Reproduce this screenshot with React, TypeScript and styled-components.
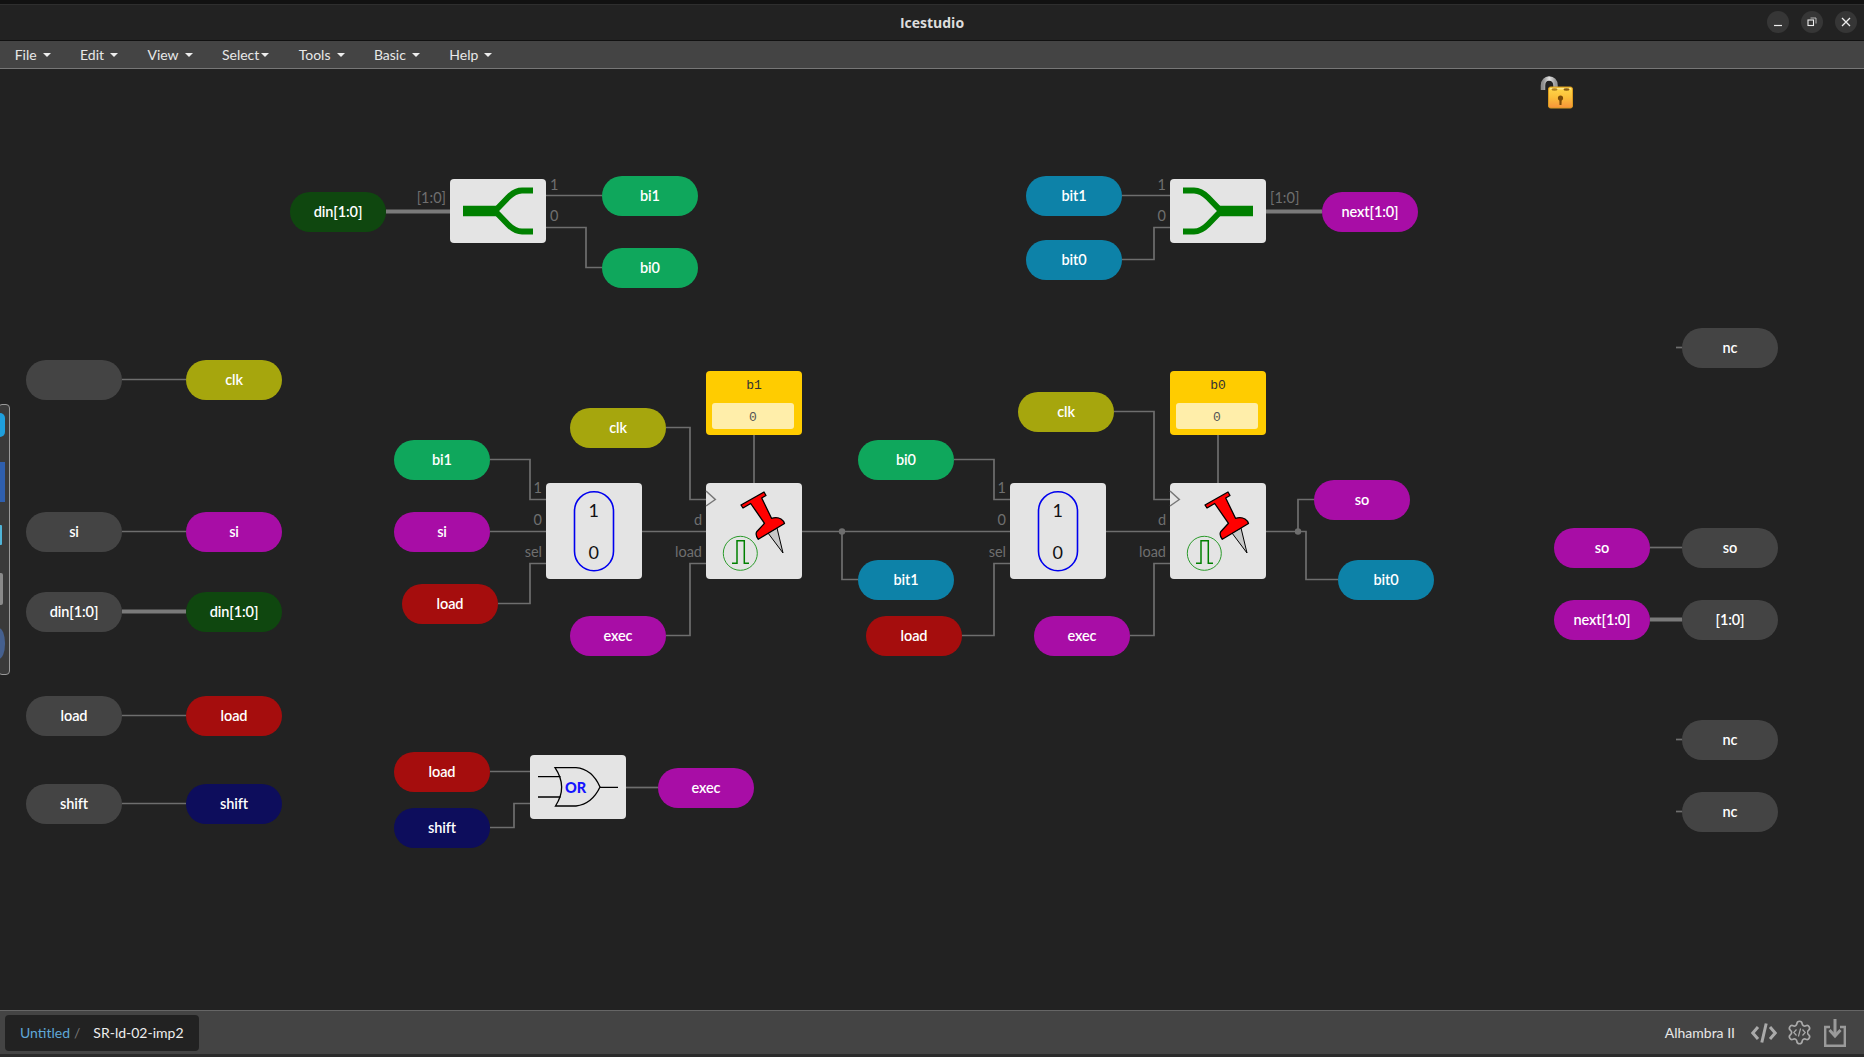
import React from "react";
import styled, { createGlobalStyle } from "styled-components";
import { Settings } from "lucide-react";

const OY = 69;

const Global = createGlobalStyle`
  html, body { margin: 0; padding: 0; background: #222; }
  body { font-family: "Lato", "Liberation Sans", sans-serif; }
`;

const Shell = styled.div`
  width: 1864px; height: 1057px; display: flex; flex-direction: column; overflow: hidden;
  background: #222; color: #fff;
`;
const TopStrip = styled.div`height: 4px; background: #111; border-bottom: 1px solid #2e2e2e; flex: none;`;
const TitleBar = styled.div`
  height: 35px; flex: none; background: #222; border-bottom: 1px solid #111;
  display: flex; align-items: center; justify-content: center; position: relative;
`;
const Title = styled.div`
  font-family: "Open Sans", "Noto Sans", sans-serif; font-weight: 700; font-size: 14px; color: #ddd; margin-top: -1px;
`;
const WinButtons = styled.div`
  position: absolute; right: 7px; top: 6px; display: flex; gap: 12px;
`;
const WinButton = styled.div`
  width: 22px; height: 22px; border-radius: 50%; background: #363636;
  display: flex; align-items: center; justify-content: center;
`;
const MenuBar = styled.div`
  height: 27px; flex: none; background: #444; border-bottom: 1px solid #777;
  display: flex; align-items: center;
`;
const MenuItem = styled.div<{ $gap?: number }>`
  display: flex; align-items: center; gap: ${p => p.$gap ?? 6}px; padding: 0 14.7px;
  font-size: 14px; color: #e8e8e8;
`;
const Caret = styled.span`
  width: 0; height: 0; border-left: 4px solid transparent; border-right: 4px solid transparent;
  border-top: 4.5px solid #eee; margin-top: 1px;
`;
const Canvas = styled.div`flex: 1; position: relative; background: #222; overflow: hidden;`;
const Wires = styled.svg`position: absolute; left: 0; top: 0;`;

const Pill = styled.div<{ $x: number; $y: number; $bg: string }>`
  position: absolute; left: ${p => p.$x}px; top: ${p => p.$y - OY}px;
  width: 96px; height: 40px; box-sizing: border-box; padding-bottom: 2px;
  border-radius: 20px; background: ${p => p.$bg};
  display: flex; align-items: center; justify-content: center;
  color: #fff; font-size: 14.5px; font-weight: 600; letter-spacing: -0.1px;
`;
const Block = styled.div<{ $x: number; $y: number; $h: number }>`
  position: absolute; left: ${p => p.$x}px; top: ${p => p.$y - OY}px;
  width: 96px; height: ${p => p.$h}px; border-radius: 4px; background: #e4e4e4;
`;
const Symbol = styled.svg`display: block; overflow: visible;`;
const PortLabel = styled.div<{ $x: number; $y: number; $right?: boolean }>`
  position: absolute; top: ${p => p.$y - OY - 10}px; line-height: 20px;
  font-size: 14.5px; color: #6f6f6f; white-space: nowrap;
  ${p => (p.$right ? `right: ${1864 - p.$x}px;` : `left: ${p.$x}px;`)}
`;
const Constant = styled.div<{ $x: number; $y: number }>`
  position: absolute; left: ${p => p.$x}px; top: ${p => p.$y - OY}px;
  width: 96px; height: 64px; border-radius: 4px; background: #ffcc00;
  box-sizing: border-box; padding: 6px; display: flex; flex-direction: column; align-items: flex-start;
`;
const ConstName = styled.div`
  font-family: "Liberation Mono", monospace; font-size: 13px; color: #333; line-height: 16px; height: 25px;
  padding-top: 1px; align-self: center;
`;
const ConstField = styled.div`
  width: 82px; height: 26px; box-sizing: border-box; padding-top: 2px; border-radius: 3px; background: #ffeeaa; color: #555;
  font-family: "Liberation Mono", monospace; font-size: 13px;
  display: flex; align-items: center; justify-content: center;
`;
const Palette = styled.div`
  position: absolute; left: -2px; top: ${404 - OY}px; width: 10px; height: 269px;
  background: #3a3a3a; border: 1px solid #999; border-radius: 4px; overflow: hidden;
`;
const PaletteIcon = styled.div<{ $top: number; $w: number; $h: number; $bg: string; $r: string }>`
  position: absolute; left: 0; top: ${p => p.$top - 405}px; width: ${p => p.$w}px; height: ${p => p.$h}px;
  background: ${p => p.$bg}; border-radius: ${p => p.$r};
`;
const LockWrap = styled.div`position: absolute; left: 1540px; top: ${76 - OY}px;`;
const Footer = styled.div`
  height: 43px; flex: none; background: #444; border-top: 1px solid #666; border-bottom: 3px solid #2a2a2a;
  display: flex; align-items: center; justify-content: space-between; padding: 0 18px 0 5px;
`;
const Crumbs = styled.div`
  height: 36px; width: 194px; box-sizing: border-box; background: #222; border-radius: 4px;
  display: flex; align-items: center; padding-left: 15px; font-size: 14px; color: #eee;
`;
const CrumbLink = styled.span`color: #5fa8d8;`;
const CrumbSep = styled.span`color: #777; margin: 0 13px 0 4px;`;
const FooterRight = styled.div`display: flex; align-items: center; color: #e8e8e8; font-size: 14px;`;
const Board = styled.span`margin-right: 16px;`;
const FooterIcon = styled.div<{ $gap?: number }>`
  display: flex; align-items: center; margin-right: ${p => p.$gap ?? 9}px; color: #aaa;
`;

const C = {
  green: "#0fa75c", dark: "#0f470f", olive: "#a6a60d", purple: "#a80da6", red: "#a50d0d",
  navy: "#0d0d5c", teal: "#0d82a8", gray: "#444444",
};

const pills: [number, number, string, string][] = [
  [290, 192, C.dark, "din[1:0]"], [602, 176, C.green, "bi1"], [602, 248, C.green, "bi0"],
  [1026, 176, C.teal, "bit1"], [1026, 240, C.teal, "bit0"], [1322, 192, C.purple, "next[1:0]"],
  [26, 360, C.gray, ""], [186, 360, C.olive, "clk"], [26, 512, C.gray, "si"], [186, 512, C.purple, "si"],
  [26, 592, C.gray, "din[1:0]"], [186, 592, C.dark, "din[1:0]"], [26, 696, C.gray, "load"], [186, 696, C.red, "load"],
  [26, 784, C.gray, "shift"], [186, 784, C.navy, "shift"],
  [394, 440, C.green, "bi1"], [394, 512, C.purple, "si"], [402, 584, C.red, "load"],
  [570, 408, C.olive, "clk"], [570, 616, C.purple, "exec"],
  [858, 440, C.green, "bi0"], [858, 560, C.teal, "bit1"], [866, 616, C.red, "load"],
  [1018, 392, C.olive, "clk"], [1034, 616, C.purple, "exec"],
  [1314, 480, C.purple, "so"], [1338, 560, C.teal, "bit0"],
  [394, 752, C.red, "load"], [394, 808, C.navy, "shift"], [658, 768, C.purple, "exec"],
  [1682, 328, C.gray, "nc"], [1554, 528, C.purple, "so"], [1682, 528, C.gray, "so"],
  [1554, 600, C.purple, "next[1:0]"], [1682, 600, C.gray, "[1:0]"], [1682, 720, C.gray, "nc"], [1682, 792, C.gray, "nc"],
];

const thin = [
  "M546 195.5H602", "M546 227.5H586V267.5H602",
  "M1122 195.5H1170", "M1122 259.5H1154V227.5H1170",
  "M122 379.5H186", "M122 531.5H186", "M122 715.5H186", "M122 803.5H186",
  "M490 459.5H530V499.5H546", "M490 531.5H546", "M498 603.5H530V563.5H546",
  "M666 427.5H690V499.5H706", "M666 635.5H690V563.5H706", "M642 531.5H706", "M754 435V483",
  "M802 531.5H1010", "M842 531.5V579.5H858",
  "M954 459.5H994V499.5H1010", "M962 635.5H994V563.5H1010",
  "M1114 411.5H1154V499.5H1170", "M1130 635.5H1154V563.5H1170", "M1106 531.5H1170", "M1218 435V483",
  "M1266 531.5H1306V579.5H1338", "M1298 531.5V499.5H1314",
  "M490 771.5H530", "M490 827.5H514V803.5H530", "M626 787.5H658",
  "M1650 547.5H1682", "M1676 347.5H1682", "M1676 739.5H1682", "M1676 811.5H1682",
];
const thick = ["M386 211.5H450", "M1266 211.5H1322", "M122 611.5H186", "M1650 619.5H1682"];

const labels: [number, number, string, boolean][] = [
  [446, 198, "[1:0]", true], [550, 185, "1", false], [550, 216, "0", false],
  [1166, 185, "1", true], [1166, 216, "0", true], [1270, 198, "[1:0]", false],
  [542, 488, "1", true], [542, 520, "0", true], [542, 552, "sel", true], [702, 520, "d", true], [702, 552, "load", true],
  [1006, 488, "1", true], [1006, 520, "0", true], [1006, 552, "sel", true], [1166, 520, "d", true], [1166, 552, "load", true],
];

const SymbolText = styled.text<{ $size: number; $weight?: number; $color: string }>`
  font-family: "Lato", sans-serif; font-size: ${p => p.$size}px; font-weight: ${p => p.$weight ?? 400};
  fill: ${p => p.$color}; text-anchor: middle; dominant-baseline: central;
`;

const SplitIcon = ({ flip }: { flip?: boolean }) => (
  <Symbol width="96" height="64" viewBox="0 0 96 64">
    <g transform={flip ? "translate(96,0) scale(-1,1)" : undefined} fill="none" stroke="#008000">
      <path d="M13 32H47" strokeWidth="10.5" />
      <path d="M45 32L58 18.5Q65 11.5 72 11.5H83" strokeWidth="6" />
      <path d="M45 32L58 45.5Q65 52.5 72 52.5H83" strokeWidth="6" />
    </g>
  </Symbol>
);

const MuxIcon = () => (
  <Symbol width="96" height="96" viewBox="0 0 96 96">
    <rect x="28.5" y="8.7" width="39" height="79" rx="19.5" fill="none" stroke="#0000ee" strokeWidth="1.6" />
    <SymbolText x="47.7" y="26.8" $size={18} $color="#111">1</SymbolText>
    <SymbolText x="47.7" y="68.5" $size={18} $color="#111">0</SymbolText>
  </Symbol>
);

const FlipFlopIcon = () => (
  <Symbol width="96" height="96" viewBox="0 0 96 96">
    <path d="M0 8L9.3 16.5L0 23" fill="#e4e4e4" stroke="#777" strokeWidth="1.5" />
    <path d="M62 50L71 45L77 70Z" fill="#c8c8c8" stroke="#000" strokeWidth="1" />
    <path d="M35 22L58 9L60 12.5L55.7 15L65.5 35.3Q71 33.5 75 36Q78 38 78.5 40.5L52.3 56.3Q49 52 50.7 48.7L58.5 40.3L44.7 20.5L37 25Z" fill="#ff0000" stroke="#000" strokeWidth="1.3" strokeLinejoin="round" />
    <circle cx="34.3" cy="70.3" r="17" fill="#e4e4e4" stroke="#2a9a2a" strokeWidth="1" />
    <path d="M26 80.3H31V57.7H38.3V80.3H43" fill="none" stroke="#008000" strokeWidth="1.5" />
  </Symbol>
);

const OrIcon = () => (
  <Symbol width="96" height="64" viewBox="0 0 96 64">
    <g fill="none" stroke="#000" strokeWidth="1.3">
      <path d="M25 12.7H46Q62 14 70 32Q62 49 46 51H25.5Q38 32 25 12.7Z" />
      <path d="M8 21.7H30.5M8 42H30.5M70 32.3H88" />
    </g>
    <SymbolText x="45.7" y="32.5" $size={14.5} $weight={900} $color="#1414ff">OR</SymbolText>
  </Symbol>
);

const UnlockIcon = () => (
  <svg width="34" height="34" viewBox="0 0 34 34">
    <defs>
      <linearGradient id="lockBody" x1="0" y1="0" x2="0" y2="1">
        <stop offset="0" stopColor="#ffd94a" />
        <stop offset="0.5" stopColor="#fbbf3a" />
        <stop offset="1" stopColor="#f8933a" />
      </linearGradient>
      <linearGradient id="lockShackle" x1="0" y1="0" x2="1" y2="0">
        <stop offset="0" stopColor="#8d8d8d" />
        <stop offset="0.5" stopColor="#e2e2e2" />
        <stop offset="1" stopColor="#9a9a9a" />
      </linearGradient>
    </defs>
    <path d="M3 14V9.5C3 5 6 2.5 9 2.5C13 2.5 15.5 5 15.5 9.5V14" fill="none" stroke="url(#lockShackle)" strokeWidth="4.5" />
    <rect x="8.5" y="11" width="24" height="21" rx="2" fill="url(#lockBody)" stroke="#d99a20" strokeWidth="1" />
    <rect x="10" y="12" width="21" height="1.5" fill="#ffe98a" />
    <ellipse cx="26.5" cy="13.5" rx="3" ry="1.3" fill="#8a5a10" />
    <ellipse cx="14.5" cy="13.5" rx="3" ry="1.3" fill="#b08020" />
    <circle cx="20.5" cy="22" r="2.6" fill="#7a4a08" />
    <path d="M19.3 23H21.7L21.5 29H19.5Z" fill="#7a4a08" />
  </svg>
);

const CodeIcon = () => (
  <svg width="26" height="22" viewBox="0 0 26 22" fill="none" stroke="currentColor" strokeWidth="3">
    <path d="M7 5L1.8 11L7 17M19 5L24.2 11L19 17M15.2 1.5L10.8 20.5" />
  </svg>
);
const GearBox = styled.div`position: relative; width: 27px; height: 27px;`;
const GearCenter = styled.div`position: absolute; left: 6.5px; top: 8.5px; width: 14px; height: 10px; background: #444;`;
const GearCode = styled.svg`position: absolute; left: 0.5px; top: 0.5px;`;
const GearCodeIcon = () => (
  <GearBox>
    <Settings size={27} strokeWidth={1.5} color="#aaa" />
    <GearCenter>
      <GearCode width="13" height="9" viewBox="0 0 13 9" fill="none" stroke="#aaa" strokeWidth="1.2">
        <path d="M3.5 1.5L0.8 4.5L3.5 7.5M9.5 1.5L12.2 4.5L9.5 7.5M7.6 0.5L5.4 8.5" />
      </GearCode>
    </GearCenter>
  </GearBox>
);
const SaveIcon = () => (
  <svg width="22" height="28" viewBox="0 0 22 28" fill="none" stroke="#9a9a9a">
    <path d="M6 8H1.2V26.8H20.8V8H16" strokeWidth="2.4" />
    <path d="M11 0V16" strokeWidth="3" />
    <path d="M5.5 11L11 17L16.5 11" strokeWidth="3" />
  </svg>
);

const menus: [string, number?][] = [["File"], ["Edit"], ["View"], ["Select", 2], ["Tools"], ["Basic"], ["Help"]];

export default function App() {
  return (
    <Shell>
      <Global />
      <TopStrip />
      <TitleBar>
        <Title>Icestudio</Title>
        <WinButtons>
          <WinButton>
            <svg width="10" height="10" viewBox="0 0 10 10"><path d="M1 8.5H9" stroke="#eee" strokeWidth="1.2" /></svg>
          </WinButton>
          <WinButton>
            <svg width="10" height="10" viewBox="0 0 10 10" fill="none" stroke="#eee">
              <rect x="1" y="3" width="5.5" height="5.5" strokeWidth="1.1" />
              <path d="M3.5 1H9V6.5" strokeWidth="0.7" />
            </svg>
          </WinButton>
          <WinButton>
            <svg width="10" height="10" viewBox="0 0 10 10"><path d="M1 1L9 9M9 1L1 9" stroke="#eee" strokeWidth="1.3" /></svg>
          </WinButton>
        </WinButtons>
      </TitleBar>
      <MenuBar>
        {menus.map(([m, g]) => (
          <MenuItem key={m} $gap={g}>{m}<Caret /></MenuItem>
        ))}
      </MenuBar>
      <Canvas>
        <Wires width="1864" height="941" viewBox={`0 ${OY} 1864 941`} fill="none">
          {thin.map(d => <path key={d} d={d} stroke="#6e6e6e" strokeWidth="1.7" />)}
          {thick.map(d => <path key={d} d={d} stroke="#7a7a7a" strokeWidth="4" />)}
          <circle cx="842" cy="531.5" r="3.2" fill="#6e6e6e" />
          <circle cx="1298" cy="531.5" r="3.2" fill="#6e6e6e" />
        </Wires>
        <Palette>
          <PaletteIcon $top={413} $w={6} $h={24} $bg="#1f9fdc" $r="0 5px 5px 0" />
          <PaletteIcon $top={462} $w={6} $h={40} $bg="#2f5fae" $r="0" />
          <PaletteIcon $top={525} $w={3} $h={20} $bg="#4fb4d8" $r="0 1px 1px 0" />
          <PaletteIcon $top={573} $w={4} $h={32} $bg="#8a8a8a" $r="0 2px 2px 0" />
          <PaletteIcon $top={628} $w={6} $h={31} $bg="#45608f" $r="0 6px 6px 0 / 0 15px 15px 0" />
        </Palette>
        <LockWrap><UnlockIcon /></LockWrap>
        {pills.map(([x, y, bg, t], i) => (
          <Pill key={i} $x={x} $y={y} $bg={bg}>{t}</Pill>
        ))}
        {labels.map(([x, y, t, r], i) => (
          <PortLabel key={i} $x={x} $y={y} $right={r}>{t}</PortLabel>
        ))}
        <Block $x={450} $y={179} $h={64}><SplitIcon /></Block>
        <Block $x={1170} $y={179} $h={64}><SplitIcon flip /></Block>
        <Block $x={546} $y={483} $h={96}><MuxIcon /></Block>
        <Block $x={1010} $y={483} $h={96}><MuxIcon /></Block>
        <Block $x={706} $y={483} $h={96}><FlipFlopIcon /></Block>
        <Block $x={1170} $y={483} $h={96}><FlipFlopIcon /></Block>
        <Block $x={530} $y={755} $h={64}><OrIcon /></Block>
        <Constant $x={706} $y={371}><ConstName>b1</ConstName><ConstField>0</ConstField></Constant>
        <Constant $x={1170} $y={371}><ConstName>b0</ConstName><ConstField>0</ConstField></Constant>
      </Canvas>
      <Footer>
        <Crumbs>
          <CrumbLink>Untitled</CrumbLink>
          <CrumbSep>/</CrumbSep>
          SR-ld-02-imp2
        </Crumbs>
        <FooterRight>
          <Board>Alhambra II</Board>
          <FooterIcon><CodeIcon /></FooterIcon>
          <FooterIcon $gap={11}><GearCodeIcon /></FooterIcon>
          <FooterIcon $gap={0}><SaveIcon /></FooterIcon>
        </FooterRight>
      </Footer>
    </Shell>
  );
}
